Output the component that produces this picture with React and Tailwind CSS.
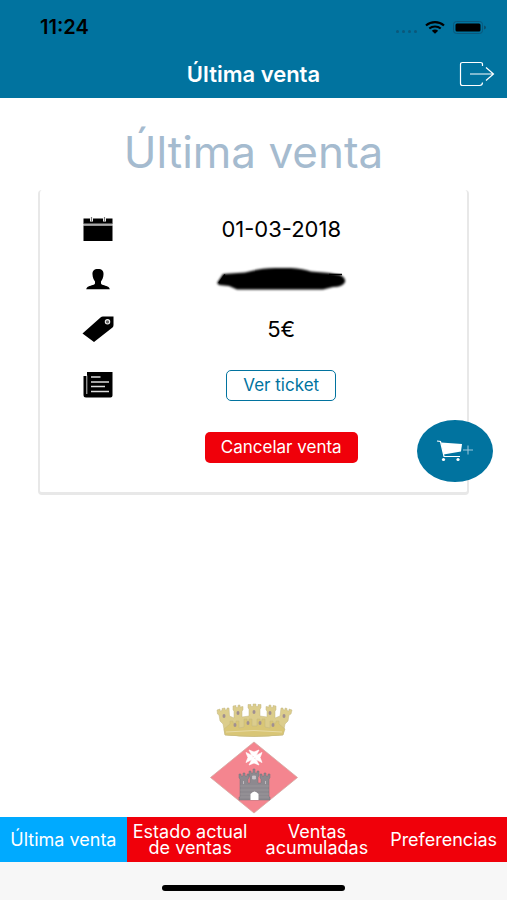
import React from "react";

const LogoutIcon = () => (
  <svg width="36" height="26" viewBox="0 0 36 26" fill="none" stroke="currentColor" strokeWidth="1.2">
    <path d="M23.500 5V3.500Q23.500 1.500 21.500 1.500H3.500Q1.500 1.500 1.500 3.500V22.500Q1.500 24.500 3.500 24.500H20.500Q23.500 24.500 23.500 21.500" />
    <path d="M11 13H34.500M27 6.500L34.500 13L27 19.500" />
  </svg>
);

const CalendarIcon = () => (
  <svg width="32" height="26" viewBox="0 0 32 26">
    <path d="M1.500 2.500H30.500V8H1.500ZM1.500 9.500H30.500V25H1.500Z" fill="#000" />
    <path d="M1.500 7.500H30.500V9.500H1.500Z" fill="#aaa" />
    <path d="M9.500 1V5.500M22.500 1V5.500" stroke="#fff" strokeWidth="3" />
    <path d="M9.500 1V6M22.500 1V6" stroke="#777" strokeWidth="1.200" />
  </svg>
);

const PersonIcon = () => (
  <svg width="32" height="26" viewBox="0 0 32 26">
    <path
      d="M16 3C12 3 10.200 5 10.500 8.500C10.600 12 12 14 13 15.500V17.500C12 19.500 8 19.300 5.500 21Q4.500 22 4.200 23.200H27.800Q27.500 22 26.500 21C24 19.300 20 19.500 19 17.500V15.500C20 14 21.400 12 21.500 8.500C21.800 5 20 3 16 3Z"
      fill="#000"
    />
  </svg>
);

const TagIcon = () => (
  <svg width="32" height="26" viewBox="0 0 32 26">
    <path d="M.5 17.500L18.500 1.500Q19.500 .5 21 .5H31.500V9Q31.500 10.500 30.500 11.500L12 26Z" fill="#000" />
    <circle cx="25.500" cy="5.800" r="2.200" fill="#666" stroke="#eee" strokeWidth="1.100" />
  </svg>
);

const NewsIcon = () => (
  <svg width="32" height="26" viewBox="0 0 32 26">
    <path d="M5 0H30.500V23.500Q30.500 25.500 28.500 25.500H4Q1.500 25.500 1.500 23V4H5Z" fill="#000" />
    <path d="M4.800 3.500V22" stroke="#fff" strokeWidth=".8" />
    <path d="M9 5H18.500M9 10H27M9 14.500H23M9 19.500H27" stroke="#ddd" strokeWidth="1.300" />
  </svg>
);

const CartIcon = () => (
  <svg width="38" height="24" viewBox="0 0 38 24">
    <path d="M1 2L4.500 2.500L8 17.500H24" fill="none" stroke="#fff" strokeWidth="1.200" />
    <path d="M5 3.500L26 5L25 12.500L7.500 15.500Z" fill="#fff" />
    <circle cx="7.500" cy="20.500" r="1.600" fill="#fff" />
    <circle cx="22" cy="20.500" r="1.600" fill="#fff" />
    <path d="M27 11H37M32 6.500V15.500" stroke="#9cc9dd" strokeWidth="1" />
  </svg>
);

const WifiIcon = () => (
  <svg width="20" height="13" viewBox="0 0 20 13" fill="none" stroke="#000" strokeWidth="2.200">
    <path d="M1 4.500C6 .1 14 .1 19 4.500M4.300 7.500C7.500 4.800 12.500 4.800 15.700 7.500" />
    <path d="M6.800 9.800Q10 7.200 13.200 9.800L10 12.700Z" fill="#000" stroke="none" />
  </svg>
);

const BatteryIcon = () => (
  <svg width="34" height="13" viewBox="0 0 34 13">
    <rect x=".5" y=".5" width="29" height="12" rx="3" fill="none" stroke="#0b587b" />
    <rect x="2.500" y="2.500" width="25" height="8" rx="1.500" fill="#000" />
    <path d="M31 4.500Q33 5 33 6.500T31 8.500Z" fill="#0b4f6b" />
  </svg>
);

// Hand-scribbled cover over the customer id
const Redacted = () => (
  <svg width="136" height="26" viewBox="0 0 136 26" role="img" aria-label="Oculto">
    <defs>
      <filter id="soft" x="-10%" y="-30%" width="120%" height="160%">
        <feGaussianBlur stdDeviation="1.300" />
      </filter>
    </defs>
    <path
      d="M4 17L10 8L32 6.500Q48 2 62 2H78Q90 2.500 98 5.500L116 7L127 9Q133 12 132 16Q130 21 120 21L110 23.500H24L16 20L6 19Z"
      fill="#000"
      filter="url(#soft)"
    />
    <path d="M6 17L12 8.500M116 8.500H129" fill="none" stroke="#000" strokeWidth="1.500" />
  </svg>
);

const Crest = () => (
  <svg width="90" height="112" viewBox="0 0 90 112" role="img" aria-label="Escudo municipal">
    <g fill="#dccd8c" stroke="#c2b682" strokeWidth=".5">
      <path d="M8 8L11 7V9L13 8.500V6.500L16 6V8L18 7.500V6L20 6L20.500 14L25 16V9L24 8V4L27 3.500V5.500L29 5.200V3.200L31 3V5L34 4.500V8L33 9V15L40 14V7L39 6V2.500H42V4.500H44V2H47V4.500H49V2.500H52V6L51 7V14L58 15V9L57 8V4.500L60 5V3L62 3.200V5.200L64 5.500V3.500L67 4V8L66 9V16L71 14L72 6L74 6V7.500L76 8V6L78 6.500V8.500L80 9V7L83 8L82 12L80 13L79 19L76 22L74 33Q45 36 16 33L14 22L11 19L10 13L8.500 12Z" />
      <path d="M15 27L21 22V19H24V21H27V19H30V26L35 25V17H38V19H40V17H43V24H48V17H51V19H53V17H56V25L61 26V19H64V21H67V19H70V22L76 27L74 33Q45 36 16 33Z" fill="#d9c676" />
      <path d="M17 30Q45 27 73 30" fill="none" stroke="#e8dba5" strokeWidth="1" />
    </g>
    <g fill="#a08f92">
      <ellipse cx="15" cy="14" rx="1.500" ry="2" />
      <ellipse cx="29" cy="11" rx="1.500" ry="2" />
      <ellipse cx="45" cy="10" rx="1.500" ry="2" />
      <ellipse cx="61" cy="11" rx="1.500" ry="2" />
      <ellipse cx="75" cy="14" rx="1.500" ry="2" />
      <ellipse cx="26" cy="23" rx="1.500" ry="2" />
      <ellipse cx="39" cy="21" rx="1.500" ry="2" />
      <ellipse cx="51" cy="21" rx="1.500" ry="2" />
      <ellipse cx="64" cy="23" rx="1.500" ry="2" />
    </g>
    <path d="M45 40L88.500 75.500L45 111L1.500 75.500Z" fill="#f4858f" stroke="#d3aaa2" strokeWidth=".8" />
    {/* Maltese cross, one arm per subpath */}
    <path
      d="M44 55.500L40 48L45 50L50 48L46 55.500ZM44 55.500L40 63L45 61L50 63L46 55.500ZM45 54.500L37 50.500L39 55.500L37 60.500L45 56.500ZM45 54.500L53 50.500L51 55.500L53 60.500L45 56.500Z"
      fill="#fff"
      stroke="#fff"
      strokeWidth=".7"
    />
    <path
      d="M30 98V95H31V77L30 76V72H32V74H34V71H36V74H38V72H40V76L39 77V81H41V75L40 74V69H42V71H44V67H46V71H48V69H50V74L49 75V81H52V77L51 76V72H53V74H55V71H57V74H59V72H61V76L60 77V95H61V98Z"
      fill="#8d898f"
      stroke="#77737a"
      strokeWidth=".5"
    />
    <path d="M31 84H60M31 88H60M31 92H60M31 95H60" stroke="#a5a0a6" strokeWidth=".5" />
    <path d="M43.500 74H46.500V77H43.500ZM34.500 79V82M56.500 79V82" fill="#c9c5ca" stroke="#c9c5ca" strokeWidth=".8" />
    <path d="M41.500 98V92Q45.500 87 49.500 92V98Z" fill="#fff" />
  </svg>
);

const tabs = [
  { label: "Última venta", active: true },
  { label: "Estado actual de ventas" },
  { label: "Ventas acumuladas" },
  { label: "Preferencias" },
];

const SaleRow = ({ icon, children }) => (
  <div className="flex h-[50px] items-center">
    <div className="flex w-[27%] shrink-0 justify-center">{icon}</div>
    <div className="flex w-[59%] justify-center text-[22px]">{children}</div>
  </div>
);

const App = () => {
  return (
    <div className="flex min-h-screen flex-col bg-white font-['Inter','Liberation_Sans',sans-serif] text-black">
      <header className="bg-[#01739f]">
        <div className="flex h-[50px] items-center justify-between pt-1 pr-5 pl-10">
          <span className="text-xl font-semibold">11:24</span>
          <div className="flex items-center gap-2">
            <div className="flex gap-[3px] pt-2">
              {[0, 1, 2, 3].map((dot) => (
                <span key={dot} className="size-[3px] rounded-full bg-[#0b587b]" />
              ))}
            </div>
            <WifiIcon />
            <BatteryIcon />
          </div>
        </div>
        <div className="grid h-12 grid-cols-[1fr_auto_1fr] items-center px-3 text-white">
          <h1 className="col-start-2 text-[22px] leading-7 font-semibold">Última venta</h1>
          <button aria-label="Salir" className="justify-self-end">
            <LogoutIcon />
          </button>
        </div>
      </header>

      <main className="flex grow flex-col items-center px-[38px] pt-7">
        <h2 className="text-[44px] leading-[52px] text-[#a5bbcf]">Última venta</h2>

        <section className="relative mt-3 w-full rounded-sm border-r-2 border-b-3 border-l-2 border-[#e8e8e8] pt-3.5 pb-5">
          <SaleRow icon={<CalendarIcon />}>01-03-2018</SaleRow>
          <SaleRow icon={<PersonIcon />}>
            <Redacted />
          </SaleRow>
          <SaleRow icon={<TagIcon />}>5€</SaleRow>
          <div className="pt-1.5">
            <SaleRow icon={<NewsIcon />}>
              <button className="h-[31px] rounded-[5px] border border-[#01739f] px-4 text-[17px] leading-6 text-[#01739f]">
                Ver ticket
              </button>
            </SaleRow>
          </div>
          <div className="pt-3">
            <SaleRow>
              <button className="h-[31px] rounded-[5px] bg-[#f0000a] px-4 text-[17px] leading-6 text-white">
                Cancelar venta
              </button>
            </SaleRow>
          </div>
          <button
            aria-label="Nueva venta"
            className="absolute -right-[26px] bottom-2.5 flex h-[62px] w-[76px] items-center justify-center rounded-[50%] bg-[#01739f]"
          >
            <CartIcon />
          </button>
        </section>

        <div className="mt-auto pb-[3px]">
          <Crest />
        </div>
      </main>

      <footer className="bg-[#f7f7f7]">
        <nav className="grid h-[45px] grid-cols-4">
          {tabs.map((tab) => (
            <a
              key={tab.label}
              href="#"
              className={`flex items-center justify-center px-0.5 text-center text-[18px] leading-4 text-white ${
                tab.active ? "bg-[#00aaff]" : "bg-[#f0000a]"
              }`}
            >
              {tab.label}
            </a>
          ))}
        </nav>
        <div className="flex h-[38px] justify-center pt-[23px]">
          <div className="h-1.5 w-[36%] rounded-full bg-black" />
        </div>
      </footer>
    </div>
  );
};

export default App;
